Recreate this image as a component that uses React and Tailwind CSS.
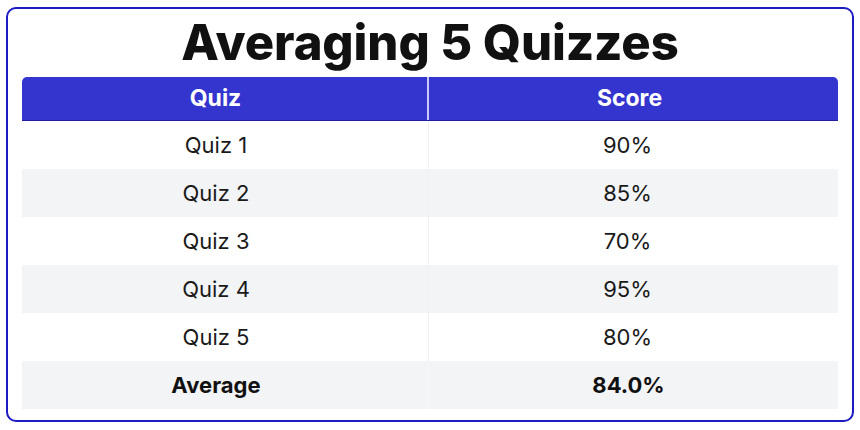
export default function App() {
  const rows = [
    ['Quiz 1', '90%'],
    ['Quiz 2', '85%'],
    ['Quiz 3', '70%'],
    ['Quiz 4', '95%'],
    ['Quiz 5', '80%'],
  ]

  return (
    <div className="w-[860px] h-[430px] bg-white pl-[6px] pt-[7px]" style={{ fontFamily: 'Inter, "Liberation Sans", sans-serif' }}>
      <div className="w-[848px] h-[415px] border-2 border-[#1c1cc4] rounded-[10px] px-[14px] flex flex-col">
        <h1 className="h-[68px] flex items-center justify-center text-[49px] font-extrabold text-[#111] tracking-[-0.1px] leading-none pb-[2px]">
          Averaging 5 Quizzes
        </h1>
        <div className="w-[816px]">
          <div className="grid grid-cols-[407px_1fr] h-[44px] bg-[#3434cf] rounded-t-[5px] border-b border-[#2020a0] text-white font-bold text-[23px]">
            <div className="flex items-center justify-center pr-[18px] border-r-2 border-[#c8c8f0]">Quiz</div>
            <div className="flex items-center justify-center pr-[8px]">Score</div>
          </div>
          {rows.map(([q, s], i) => (
            <div
              key={q}
              className={`grid grid-cols-[407px_1fr] h-[48px] text-[22px] text-[#1a1a1a] ${i % 2 === 1 ? 'bg-[#f3f4f6]' : 'bg-white'}`}
            >
              <div className="flex items-center justify-center pr-[18px] border-r border-[#f0f0f2]">{q}</div>
              <div className="flex items-center justify-center pr-[12px]">{s}</div>
            </div>
          ))}
          <div className="grid grid-cols-[407px_1fr] h-[48px] text-[22px] font-bold text-[#111] bg-[#f3f4f6]">
            <div className="flex items-center justify-center pr-[18px] border-r border-[#f7f7f9]">Average</div>
            <div className="flex items-center justify-center pr-[10px]">84.0%</div>
          </div>
        </div>
      </div>
    </div>
  )
}
